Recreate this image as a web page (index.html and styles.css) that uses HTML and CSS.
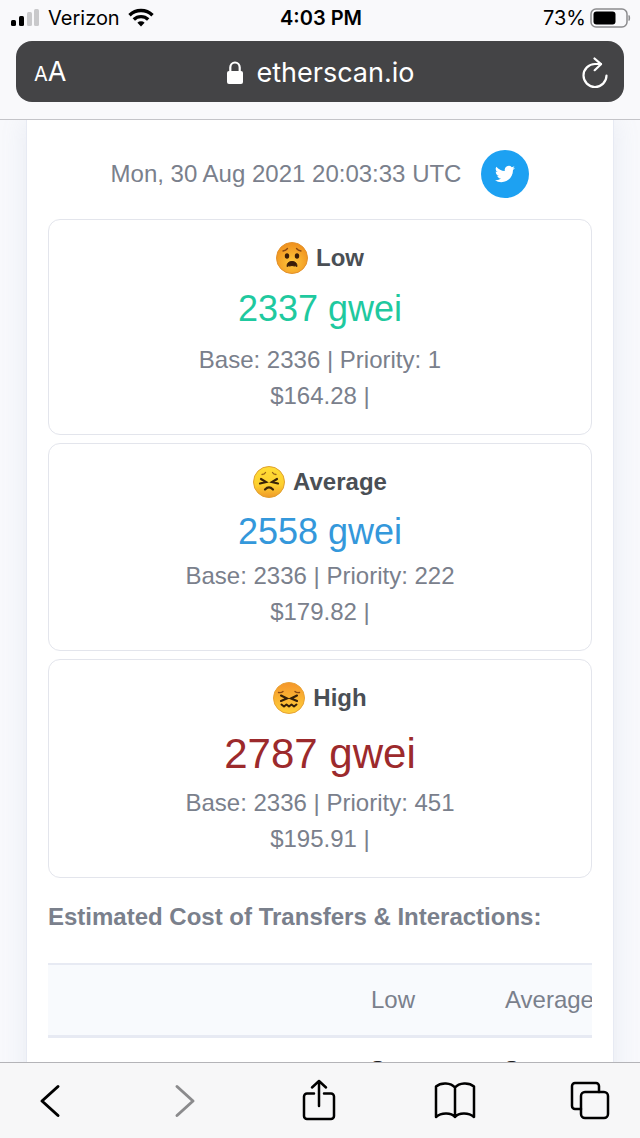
FILE: index.html
```html
<!DOCTYPE html>
<html lang="en">

<head>
    <meta charset="UTF-8">
    <meta name="viewport" content="width=device-width, initial-scale=1.0">
    <title>Ethereum Gas Tracker | Etherscan</title>
    <link rel="stylesheet" href="styles.css">
</head>

<body>
    <header class="top">
        <div class="status">
            <div class="carrier">
                <svg width="29" height="18" viewBox="0 0 29 18">
                    <rect x="0" y="11" width="5" height="6" rx="1.5" />
                    <rect x="8" y="7" width="5" height="10" rx="1.5" />
                    <rect x="16" y="3" width="5" height="14" rx="1.5" fill="#c9c9cb" />
                    <rect x="23" y="0" width="5" height="17" rx="1.5" fill="#c9c9cb" />
                </svg>
                <span>Verizon</span>
                <svg width="26" height="19" viewBox="0 0 26 19" fill="none" stroke="#000" stroke-width="3.4">
                    <path d="M1.5 7.2a16.5 16.5 0 0 1 23 0" />
                    <path d="M5.8 11.5a10.4 10.4 0 0 1 14.4 0" />
                    <path d="M13 18.5l-3.6-3.7a5.2 5.2 0 0 1 7.2 0z" fill="#000" stroke="none" />
                </svg>
            </div>
            <div class="clock">4:03 PM</div>
            <div class="battery">
                <span>73%</span>
                <svg width="41" height="20" viewBox="0 0 41 20">
                    <rect x="1" y="1" width="36" height="18" rx="5" fill="none" stroke="#8c8c8e" stroke-width="1.5" />
                    <rect x="3.5" y="3.5" width="22" height="13" rx="3" />
                    <path d="M39 7.5q1.5 2.5 0 5z" fill="#8c8c8e" stroke="#8c8c8e" />
                </svg>
            </div>
        </div>
        <div class="address">
            <button class="text-size" aria-label="Text size"><small>A</small>A</button>
            <div class="url">
                <svg width="16" height="23" viewBox="0 0 16 23">
                    <rect x="0" y="10" width="16" height="13" rx="2" fill="#fff" />
                    <path d="M3.3 11V6.5a4.7 5 0 0 1 9.4 0V11" fill="none" stroke="#fff" stroke-width="2.2" />
                </svg>
                <span>etherscan.io</span>
            </div>
            <button class="reload" aria-label="Reload">
                <svg width="26" height="32" viewBox="0 0 26 32" fill="none" stroke="#fff" stroke-width="2.2" stroke-linecap="round" stroke-linejoin="round">
                    <path d="M24.5 18.5A11.5 11.5 0 1 1 13 7h6" />
                    <path d="M12.5 1.5L19 7.2l-6.3 6" />
                </svg>
            </button>
        </div>
    </header>

    <main class="page">
        <div class="panel">
            <div class="updated">
                <span>Mon, 30 Aug 2021 20:03:33 UTC</span>
                <a href="#" class="twitter" aria-label="Share on Twitter">
                    <svg width="20" height="20" viewBox="0 0 24 24" fill="#fff">
                        <path d="M23.95 4.57a10 10 0 0 1-2.82.78 4.96 4.96 0 0 0 2.16-2.73c-.95.56-2 .96-3.13 1.18a4.92 4.92 0 0 0-8.38 4.48A13.94 13.94 0 0 1 1.64 3.16a4.92 4.92 0 0 0 1.52 6.57 4.9 4.9 0 0 1-2.23-.61v.06a4.92 4.92 0 0 0 3.95 4.83 5 5 0 0 1-2.21.08 4.94 4.94 0 0 0 4.6 3.42A9.87 9.87 0 0 1 0 19.54a14 14 0 0 0 7.55 2.21c9.05 0 14-7.5 14-13.98 0-.21 0-.42-.02-.63a9.94 9.94 0 0 0 2.46-2.55z" />
                    </svg>
                </a>
            </div>

            <svg width="0" height="0" class="defs">
                <radialGradient id="orange" cx="50%" cy="65%" r="60%">
                    <stop offset="0" stop-color="#ffc83c" />
                    <stop offset="1" stop-color="#f0931f" />
                </radialGradient>
                <linearGradient id="yellow" x1="0" y1="0" x2="0" y2="1">
                    <stop offset="0" stop-color="#ffdd35" />
                    <stop offset="0.6" stop-color="#fdd02f" />
                    <stop offset="1" stop-color="#f0992a" />
                </linearGradient>
                <linearGradient id="hot" x1="0" y1="0" x2="0" y2="1">
                    <stop offset="0" stop-color="#f5952a" />
                    <stop offset="1" stop-color="#ffd03a" />
                </linearGradient>
            </svg>

            <section class="gas low">
                <h2>
                    <svg width="32" height="32" viewBox="0 0 32 32">
                        <circle cx="16" cy="16" r="15.5" fill="url(#orange)" stroke="#e3912c" />
                        <ellipse cx="11" cy="14" rx="2.2" ry="2.8" fill="#3b1d08" />
                        <ellipse cx="21" cy="14" rx="2.2" ry="2.8" fill="#3b1d08" />
                        <path d="M7 9q3-.5 4.5-2.5M25 9q-3-.5-4.5-2.5" fill="none" stroke="#8a4812" stroke-width="1.3" stroke-linecap="round" />
                        <path d="M11 24.5q0-5 5-5t5 5q-1.5-1-2.5-.5-2.5-1-5 0-1-.5-2.5.5z" fill="#3b1d08" stroke="#3b1d08" stroke-linejoin="round" />
                    </svg>
                    Low
                </h2>
                <div class="price">2337 gwei</div>
                <p>Base: 2336 | Priority: 1</p>
                <p>$164.28 |</p>
            </section>

            <section class="gas average">
                <h2>
                    <svg width="32" height="32" viewBox="0 0 32 32">
                        <circle cx="16" cy="16" r="15.5" fill="url(#yellow)" stroke="#e0a030" />
                        <path d="M8 13l5 3-6 1.5M24 13l-5 3 6 1.5" fill="none" stroke="#3b2408" stroke-width="2.2" stroke-linecap="round" />
                        <path d="M9 8.5q2.5 0 3.5-2M23 8.5q-2.5 0-3.5-2" fill="none" stroke="#9a6518" stroke-width="1.3" stroke-linecap="round" />
                        <path d="M12 23.5q4-4 8 0" fill="none" stroke="#3b2408" stroke-width="2.2" stroke-linecap="round" />
                    </svg>
                    Average
                </h2>
                <div class="price">2558 gwei</div>
                <p>Base: 2336 | Priority: 222</p>
                <p>$179.82 |</p>
            </section>

            <section class="gas high">
                <h2>
                    <svg width="32" height="32" viewBox="0 0 32 32">
                        <circle cx="16" cy="16" r="15.5" fill="url(#hot)" stroke="#e8a235" />
                        <path d="M8 13.5l6 3-6 2.5M24 13.5l-6 3 6 2.5" fill="none" stroke="#35200a" stroke-width="2.1" stroke-linecap="round" />
                        <path d="M5.5 10.5q3 .5 4.5-1M26.5 10.5q-3 .5-4.5-1" fill="none" stroke="#8a4812" stroke-width="1.4" stroke-linecap="round" />
                        <path d="M8.500 22.500l2.500 2 2.500-2 2.500 2 2.500-2 2.500 2 2.500-2" fill="none" stroke="#35200a" stroke-width="2" stroke-linecap="round" stroke-linejoin="round" />
                    </svg>
                    High
                </h2>
                <div class="price">2787 gwei</div>
                <p>Base: 2336 | Priority: 451</p>
                <p>$195.91 |</p>
            </section>

            <h3>Estimated Cost of Transfers &amp; Interactions:</h3>
            <div class="table-wrap">
                <table>
                    <thead>
                        <tr>
                            <th class="action"></th>
                            <th>Low</th>
                            <th>Average</th>
                        </tr>
                    </thead>
                    <tbody>
                        <tr>
                            <td></td>
                            <td>$</td>
                            <td>$</td>
                        </tr>
                    </tbody>
                </table>
            </div>
        </div>
    </main>

    <nav class="toolbar">
        <button aria-label="Back">
            <svg class="chevron" width="40" height="40" viewBox="0 0 40 40"><path d="M28 5.5L12 20l16 14.5" /></svg>
        </button>
        <button aria-label="Forward" disabled>
            <svg class="chevron" width="40" height="40" viewBox="0 0 40 40"><path d="M12 5.5L28 20 12 34.5" /></svg>
        </button>
        <button aria-label="Share">
            <svg width="40" height="44" viewBox="0 0 40 44"><path d="M15 14.5H8a3 3 0 0 0-3 3V37a3 3 0 0 0 3 3h24a3 3 0 0 0 3-3V17.500a3 3 0 0 0-3-3h-7M20 27V2M13 8.500L20 2l7 6.500" /></svg>
        </button>
        <button aria-label="Bookmarks">
            <svg width="42" height="40" viewBox="0 0 42 40"><path d="M21 6.5C17 1.500 7 1 2 5.500V36C7 31.500 17 31 21 36 25 31 35 31.500 40 36V5.500C35 1 25 1.500 21 6.500zV36" /></svg>
        </button>
        <button aria-label="Tabs">
            <svg width="40" height="40" viewBox="0 0 40 40"><path d="M29 11V5a3 3 0 0 0-3-3H5a3 3 0 0 0-3 3v20a3 3 0 0 0 3 3h6" /><rect x="11" y="11" width="27" height="26" rx="4" /></svg>
        </button>
    </nav>
</body>

</html>
```

FILE: styles.css
```css
*,
*::before,
*::after {
    box-sizing: border-box;
}

body {
    display: flex;
    flex-direction: column;
    height: 100vh;
    margin: 0;
    background-color: #f8f9fc;
    font-family: "Liberation Sans", Arial, Helvetica, sans-serif;
    font-size: 24px;
    line-height: 36px;
    color: #7a808c;
}

button {
    display: flex;
    align-items: center;
    justify-content: center;
    padding: 0;
    border: none;
    background: none;
    color: inherit;
    font: inherit;
}

/* browser bar */

.top {
    flex: none;
    padding-bottom: 17px;
    border-bottom: 1px solid #c4c4c8;
    background-color: #f9f9fb;
    font-family: Inter, Roboto, sans-serif;
    color: #000;
}

.status {
    display: grid;
    grid-template-columns: 1fr auto 1fr;
    align-items: center;
    height: 41px;
    padding: 0 9px 6px 11px;
    font-size: 20px;
    line-height: 24px;
}

.carrier,
.battery {
    display: flex;
    align-items: center;
    gap: 8px;
}

.battery {
    justify-content: flex-end;
    gap: 4px;
}

.clock {
    font-weight: 600;
}

.address {
    display: grid;
    grid-template-columns: 1fr auto 1fr;
    align-items: center;
    height: 61px;
    margin: 0 16px;
    padding: 2px 16px 0 18px;
    border-radius: 16px;
    background-color: #444446;
    color: #fff;
    font-size: 27px;
}

.text-size {
    justify-self: start;
    align-items: baseline;
}

.text-size small {
    font-size: 20px;
}

.url {
    display: flex;
    align-items: center;
    gap: 13px;
}

.reload {
    justify-self: end;
}

/* page content */

.page {
    flex: 1;
    min-height: 0;
    overflow: hidden;
    padding: 0 26px;
}

.panel {
    padding: 30px 21px;
    border: 1px solid #e7eaf3;
    border-top: none;
    background-color: #fff;
    box-shadow: 0 0 24px rgba(140, 152, 190, 0.15);
}

.updated {
    display: flex;
    align-items: center;
    justify-content: center;
    gap: 20px;
    margin-bottom: 21px;
}

.twitter {
    display: flex;
    align-items: center;
    justify-content: center;
    width: 48px;
    height: 48px;
    border-radius: 50%;
    background-color: #1da1f2;
}

.defs {
    position: absolute;
}

.gas {
    margin-bottom: 8px;
    padding: 20px;
    border: 1px solid #e3e5ec;
    border-radius: 12px;
    text-align: center;
}

.gas h2 {
    display: flex;
    align-items: center;
    justify-content: center;
    gap: 8px;
    margin: 0 0 6px;
    font-size: 24px;
    color: #4a4f55;
}

.gas p {
    margin: 0;
}

.price {
    font-size: 36px;
    line-height: 52px;
}

.low .price {
    margin-bottom: 6px;
    line-height: 54px;
    color: #1fc99f;
}

.average .price {
    color: #3498db;
}

.high .price {
    font-size: 42px;
    line-height: 63px;
    color: #9c2a2c;
}

h3 {
    margin: 21px 0 28px;
    font-size: 24px;
}

.table-wrap {
    overflow: hidden;
}

table {
    width: 567px;
    table-layout: fixed;
    border-collapse: collapse;
    text-align: left;
}

th {
    height: 72px;
    padding: 0 24px;
    border-top: 2px solid #e7eaf3;
    border-bottom: 3px solid #e7eaf3;
    background-color: #f8fafd;
    font-weight: normal;
}

/* the last column runs past the edge of the panel */
th:last-child {
    padding-right: 0;
}

.action {
    width: 299px;
}

td {
    padding: 14px 24px;
    color: #1e2022;
}

/* bottom toolbar */

.toolbar {
    flex: none;
    display: flex;
    justify-content: space-between;
    height: 76px;
    padding: 0 30px;
    border-top: 1px solid #b4b4b8;
    background-color: #f7f7f8;
    color: #000;
}

.toolbar svg {
    fill: none;
    stroke: currentColor;
    stroke-width: 2.5;
    stroke-linecap: round;
    stroke-linejoin: round;
}

.toolbar .chevron {
    stroke-width: 3;
}

.toolbar button:disabled {
    color: #8b8b8d;
}
```
